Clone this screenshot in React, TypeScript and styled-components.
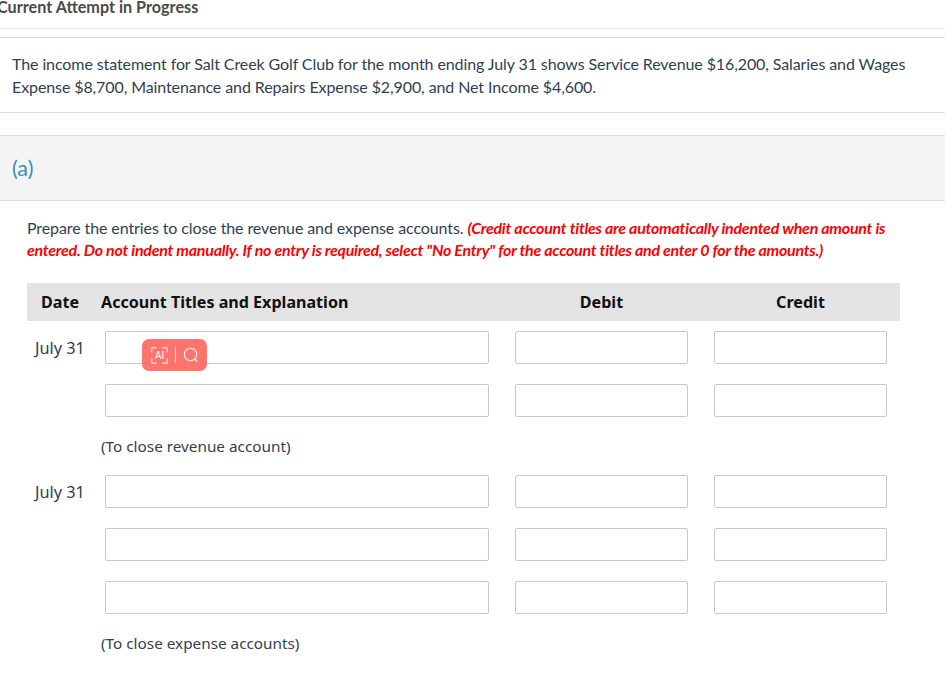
import React from "react";
import styled, { createGlobalStyle } from "styled-components";

const GlobalStyle = createGlobalStyle`
  html, body {
    margin: 0;
    padding: 0;
    background: #fff;
    overflow: hidden;
  }
  body {
    font-family: "Lato", "Liberation Sans", sans-serif;
    color: #33404f;
  }
`;

const Page = styled.div`
  width: 945px;
  height: 677px;
  overflow: hidden;
  position: relative;
`;

const AttemptTitle = styled.div`
  height: 29px;
  box-sizing: border-box;
  margin-left: -3px;
  border-bottom: 1px solid #e8e8e8;
  font-size: 16.2px;
  font-weight: 700;
  line-height: 14px;
  color: #4a4a4a;
`;

const Statement = styled.div`
  margin-top: 8px;
  height: 76px;
  box-sizing: border-box;
  padding: 14px 12px 0;
  border-top: 1px solid #dcdcdc;
  border-bottom: 1px solid #dcdcdc;
  font-size: 16px;
  line-height: 23px;
  letter-spacing: -0.1px;
  color: #2f3f52;
`;

const PartHeader = styled.div`
  margin-top: 22px;
  height: 66px;
  padding: 20px 12px 0;
  box-sizing: border-box;
  background: #f4f4f4;
  border-top: 1px solid #dcdcdc;
  border-bottom: 1px solid #dcdcdc;
  font-size: 21.5px;
  line-height: 24px;
  color: #3a8dba;
`;

const Instructions = styled.div`
  margin: 16px 0 0 27px;
  width: 880px;
  font-size: 16px;
  line-height: 22px;
  letter-spacing: -0.1px;
  color: #2f3f52;
`;

const Warning = styled.span`
  color: #f00;
  font-style: italic;
  font-weight: 700;
  letter-spacing: -0.26px;
`;

const EntryTable = styled.div`
  margin: 22px 0 0 27px;
  width: 873px;
  font-family: "Noto Sans", "Liberation Sans", sans-serif;
`;

const HeaderRow = styled.div`
  display: grid;
  grid-template-columns: 74px 414px 173px 26px 173px 13px;
  align-items: center;
  height: 38px;
  padding-bottom: 1px;
  box-sizing: border-box;
  background: #e4e4e4;
  font-size: 16.1px;
  font-weight: 700;
  color: #111;
`;

const DateHead = styled.div`
  padding-left: 14px;
`;

const TitleHead = styled.div``;

const AmountHead = styled.div<{ $col: number }>`
  grid-column: ${(p) => p.$col};
  text-align: center;
`;

const EntryRow = styled.div<{ $gap?: number }>`
  display: grid;
  grid-template-columns: 78px 384px 26px 173px 26px 173px;
  align-items: start;
  height: 33px;
  margin-top: ${(p) => p.$gap ?? 20}px;
  position: relative;
`;

const DateCell = styled.div`
  grid-column: 1;
  padding: 6px 0 0 8px;
  font-size: 16.3px;
  line-height: 22px;
  color: #33404f;
`;

const Field = styled.div<{ $col: number }>`
  grid-column: ${(p) => p.$col};
  height: 33px;
  box-sizing: border-box;
  border: 1px solid #c8c8c8;
  border-radius: 2px;
  background: #fff;
`;

const Note = styled.div`
  margin: 18px 0 0 74px;
  height: 22px;
  font-size: 15.3px;
  line-height: 22px;
  color: #33404f;
`;

const SearchBadge = styled.div`
  position: absolute;
  left: 115px;
  top: 8px;
  width: 65px;
  height: 32px;
  border-radius: 7px;
  background: #ff746c;
  display: flex;
  align-items: center;
  justify-content: center;
  gap: 7px;
  color: #fff;
`;

const Divider = styled.span`
  width: 1px;
  height: 16px;
  background: rgba(255, 255, 255, 0.75);
`;

const AiLabel = styled.text`
  font-family: "Roboto", "Liberation Sans", sans-serif;
  font-size: 10px;
  font-weight: 400;
  fill: #fff;
`;

function AiIcon() {
  return (
    <svg width="17" height="17" viewBox="0 0 17 17" fill="none" stroke="#fff" strokeWidth="1">
      <path d="M5.5 .8H.8V5.5M11.5 .8H16.2V5.5M.8 11.5V16.2H5.5M16.2 11.5V16.2H11.5" />
      <AiLabel x="8.5" y="12" textAnchor="middle" stroke="none">AI</AiLabel>
    </svg>
  );
}

function SearchIcon() {
  return (
    <svg width="16" height="16" viewBox="0 0 16 16" fill="none" stroke="#fff" strokeWidth="1.1">
      <circle cx="7.5" cy="7.5" r="6.2" />
      <path d="M11.8 12L14 14.8" />
    </svg>
  );
}

function Fields() {
  return (
    <>
      <Field $col={2} />
      <Field $col={4} />
      <Field $col={6} />
    </>
  );
}

export default function App() {
  return (
    <Page>
      <GlobalStyle />
      <AttemptTitle>Current Attempt in Progress</AttemptTitle>
      <Statement>
        The income statement for Salt Creek Golf Club for the month ending July 31 shows Service Revenue $16,200, Salaries and Wages Expense $8,700, Maintenance and Repairs Expense $2,900, and Net Income $4,600.
      </Statement>
      <PartHeader>(a)</PartHeader>
      <Instructions>
        Prepare the entries to close the revenue and expense accounts.{" "}
        <Warning>
          (Credit account titles are automatically indented when amount is entered. Do not indent manually. If no entry is required, select "No Entry" for the account titles and enter 0 for the amounts.)
        </Warning>
      </Instructions>
      <EntryTable>
        <HeaderRow>
          <DateHead>Date</DateHead>
          <TitleHead>Account Titles and Explanation</TitleHead>
          <AmountHead $col={3}>Debit</AmountHead>
          <AmountHead $col={5}>Credit</AmountHead>
        </HeaderRow>
        <EntryRow $gap={10}>
          <DateCell>July 31</DateCell>
          <Fields />
          <SearchBadge>
            <AiIcon />
            <Divider />
            <SearchIcon />
          </SearchBadge>
        </EntryRow>
        <EntryRow>
          <Fields />
        </EntryRow>
        <Note>(To close revenue account)</Note>
        <EntryRow $gap={18}>
          <DateCell>July 31</DateCell>
          <Fields />
        </EntryRow>
        <EntryRow>
          <Fields />
        </EntryRow>
        <EntryRow>
          <Fields />
        </EntryRow>
        <Note>(To close expense accounts)</Note>
      </EntryTable>
    </Page>
  );
}
